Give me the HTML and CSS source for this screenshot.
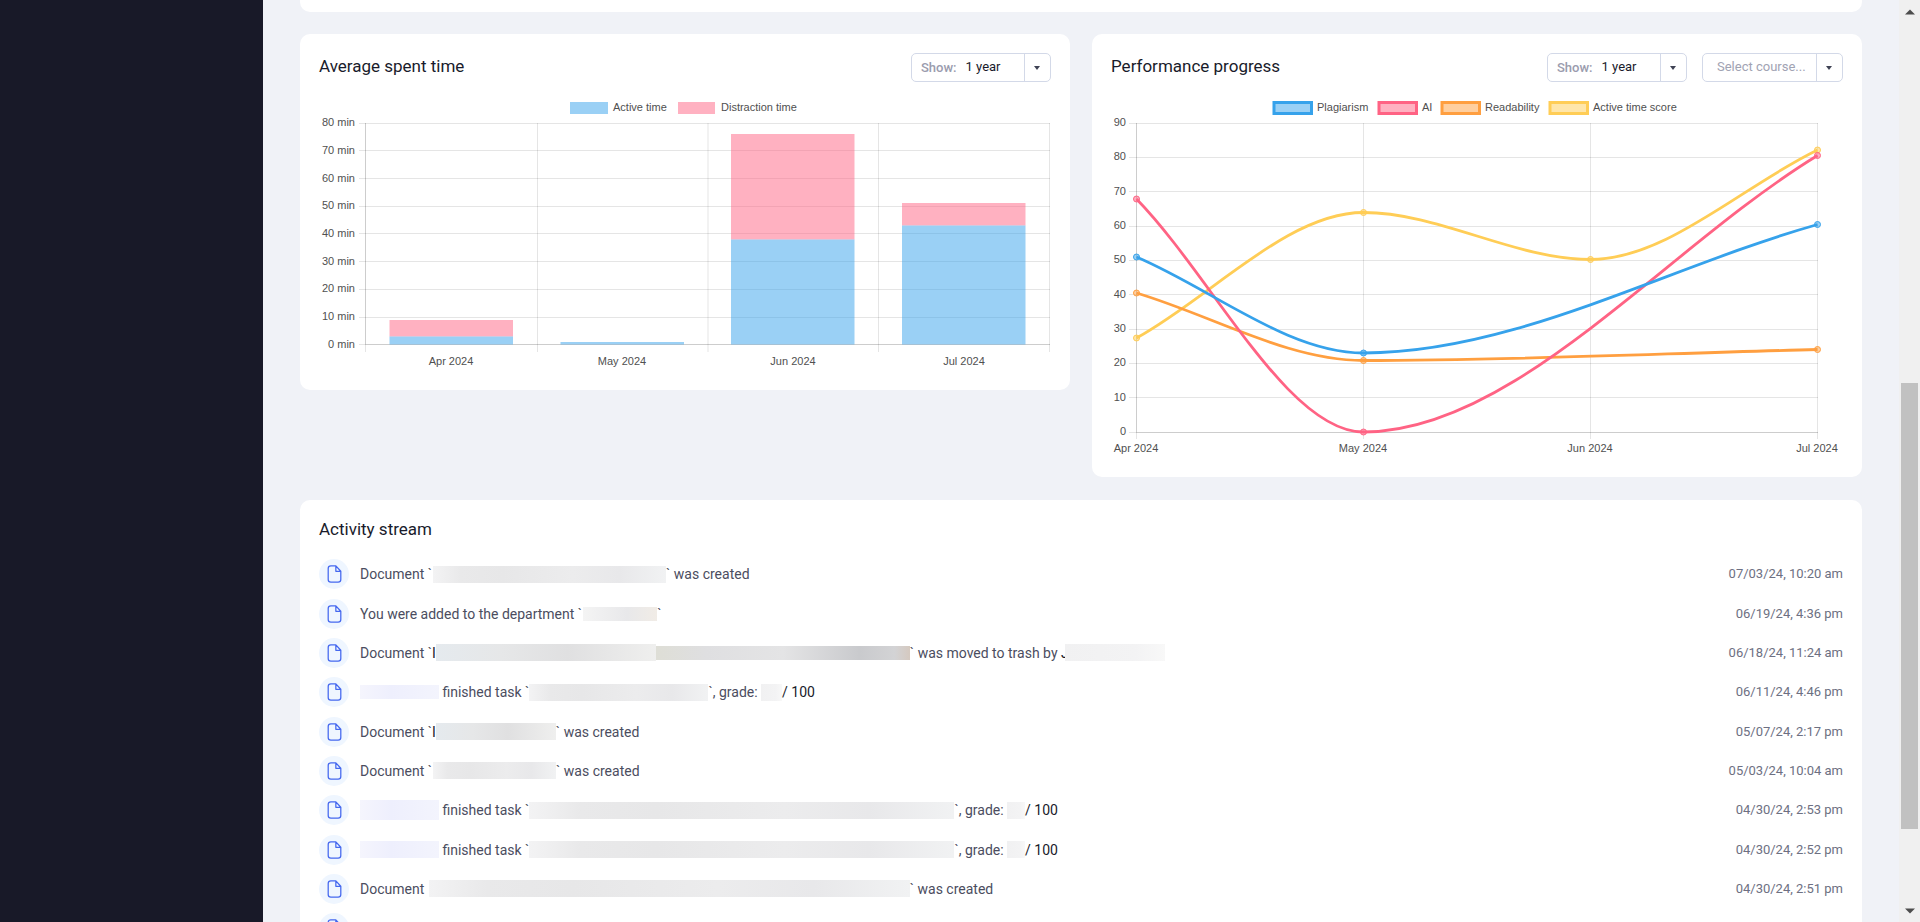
FILE: index.html
```html
<!DOCTYPE html>
<html lang="en">
<head>
<meta charset="utf-8">
<title>Dashboard</title>
<link rel="stylesheet" href="styles.css">
</head>
<body>
<svg class="sprite" aria-hidden="true">
  <symbol id="doc" viewBox="0 0 16 20">
    <path d="M9.5 1H4Q1 1 1 4V16Q1 19 4 19H12Q15 19 15 16V7Z M9.5 1V7H15" fill="none" stroke="currentColor" stroke-width="1.4" stroke-linejoin="round"/>
  </symbol>
</svg>
<div class="app">
  <nav class="sidebar" aria-label="Main"></nav>
  <main class="main">
    <section class="card card-tail"></section>
    <div class="charts">
      <section class="card">
        <header class="card-head">
          <h2>Average spent time</h2>
          <div class="filters">
            <div class="picker">
              <label for="spent-range">Show:</label>
              <select id="spent-range"><option>1 year</option></select>
            </div>
          </div>
        </header>
        <svg class="chart" viewBox="319 100 732 271" role="img" aria-label="Average spent time by month">
          <g class="legend">
            <rect x="570" y="102" width="38" height="12" class="fill-blue"/>
            <text x="613" y="111">Active time</text>
            <rect x="678" y="102" width="37" height="12" class="fill-pink"/>
            <text x="721" y="111">Distraction time</text>
          </g>
          <path class="grid" d="M359 123.5H1050M359 150.5H1050M359 178.5H1050M359 206.5H1050M359 233.5H1050M359 261.5H1050M359 289.5H1050M359 317.5H1050M359 344.5H1050M365.5 123V352M537.5 123V352M708 123V352M878.5 123V352M1049.5 123V352"/>
          <path class="grid" d="M365.5 123V344M365 344.5H1050"/>
          <g class="fill-pink">
            <rect x="389.5" y="320" width="123.5" height="16.5"/>
            <rect x="731" y="134" width="123.5" height="105.5"/>
            <rect x="902" y="203" width="123.5" height="22.5"/>
          </g>
          <g class="fill-blue">
            <rect x="389.5" y="336.5" width="123.5" height="8"/>
            <rect x="560.5" y="342" width="123.5" height="2.5"/>
            <rect x="731" y="239.5" width="123.5" height="105"/>
            <rect x="902" y="225.5" width="123.5" height="119"/>
          </g>
          <g class="ticks-y">
            <text x="355" y="126">80 min</text><text x="355" y="154">70 min</text><text x="355" y="182">60 min</text>
            <text x="355" y="209">50 min</text><text x="355" y="237">40 min</text><text x="355" y="265">30 min</text>
            <text x="355" y="292">20 min</text><text x="355" y="320">10 min</text><text x="355" y="348">0 min</text>
          </g>
          <g class="ticks-x">
            <text x="451" y="365">Apr 2024</text><text x="622" y="365">May 2024</text>
            <text x="793" y="365">Jun 2024</text><text x="964" y="365">Jul 2024</text>
          </g>
        </svg>
      </section>
      <section class="card">
        <header class="card-head">
          <h2>Performance progress</h2>
          <div class="filters">
            <div class="picker">
              <label for="progress-range">Show:</label>
              <select id="progress-range"><option>1 year</option></select>
            </div>
            <div class="picker picker-empty">
              <select aria-label="Course"><option>Select course...</option></select>
            </div>
          </div>
        </header>
        <svg class="chart" viewBox="1111 100 732 358" role="img" aria-label="Performance progress by month">
          <g class="legend legend-lines">
            <rect x="1274" y="102.5" width="37.5" height="11" class="blue"/>
            <text x="1317" y="111">Plagiarism</text>
            <rect x="1379" y="102.5" width="37.5" height="11" class="pink"/>
            <text x="1422" y="111">AI</text>
            <rect x="1442" y="102.5" width="37.5" height="11" class="orange"/>
            <text x="1485" y="111">Readability</text>
            <rect x="1550" y="102.5" width="37.5" height="11" class="yellow"/>
            <text x="1593" y="111">Active time score</text>
          </g>
          <path class="grid" d="M1129 123.5H1818M1129 157.5H1818M1129 191.5H1818M1129 226.5H1818M1129 260.5H1818M1129 294.5H1818M1129 329.5H1818M1129 363.5H1818M1129 397.5H1818M1129 432.5H1818M1136.5 123V439M1363.5 123V439M1590.5 123V439M1817.5 123V439"/>
          <path class="grid" d="M1136.5 123V432M1136 432.5H1818"/>
          <g class="series yellow">
            <path d="M1136.5 338C1212.2 296.2 1287.8 212.5 1363.5 212.5C1439.2 212.5 1514.8 259.5 1590.5 259.5C1666.2 259.5 1741.8 186.5 1817.5 150"/>
            <circle cx="1136.5" cy="338" r="3"/><circle cx="1363.5" cy="212.5" r="3"/><circle cx="1590.5" cy="259.5" r="3"/><circle cx="1817.5" cy="150" r="3"/>
          </g>
          <g class="series orange">
            <path d="M1136.5 293C1212.2 315.5 1287.8 360.5 1363.5 360.5C1514.8 360.5 1666.2 353.2 1817.5 349.5"/>
            <circle cx="1136.5" cy="293" r="3"/><circle cx="1363.5" cy="360.5" r="3"/><circle cx="1817.5" cy="349.5" r="3"/>
          </g>
          <g class="series pink">
            <path d="M1136.5 199C1212.2 276.7 1287.8 432 1363.5 432C1514.8 432 1666.2 247.7 1817.5 155.5"/>
            <circle cx="1136.5" cy="199" r="3"/><circle cx="1363.5" cy="432" r="3"/><circle cx="1817.5" cy="155.5" r="3"/>
          </g>
          <g class="series blue">
            <path d="M1136.5 257C1212.2 289 1287.8 353 1363.5 353C1514.8 353 1666.2 267.3 1817.5 224.5"/>
            <circle cx="1136.5" cy="257" r="3"/><circle cx="1363.5" cy="353" r="3"/><circle cx="1817.5" cy="224.5" r="3"/>
          </g>
          <g class="ticks-y">
            <text x="1126" y="126">90</text><text x="1126" y="160">80</text><text x="1126" y="195">70</text><text x="1126" y="229">60</text><text x="1126" y="263">50</text>
            <text x="1126" y="298">40</text><text x="1126" y="332">30</text><text x="1126" y="366">20</text><text x="1126" y="401">10</text><text x="1126" y="435">0</text>
          </g>
          <g class="ticks-x">
            <text x="1136" y="452">Apr 2024</text><text x="1363" y="452">May 2024</text>
            <text x="1590" y="452">Jun 2024</text><text x="1817" y="452">Jul 2024</text>
          </g>
        </svg>
      </section>
    </div>
    <section class="card stream">
      <h2>Activity stream</h2>
      <ul>
        <li><span class="badge"><svg><use href="#doc"/></svg></span><p>Document `<i class="mask" style="width:233px"></i>` was created</p><time>07/03/24, 10:20 am</time></li>
        <li><span class="badge"><svg><use href="#doc"/></svg></span><p>You were added to the department `<i class="mask short warm" style="width:74px"></i>`</p><time>06/19/24, 4:36 pm</time></li>
        <li><span class="badge"><svg><use href="#doc"/></svg></span><p>Document `<b class="peek">I</b><i class="mask cool" style="width:220px"></i><i class="mask short dark" style="width:254px"></i>` was moved to trash by <b class="peek">J</b><i class="mask over pale" style="width:100px"></i></p><time>06/18/24, 11:24 am</time></li>
        <li><span class="badge"><svg><use href="#doc"/></svg></span><p><i class="mask short name" style="width:79px"></i> finished task `<i class="mask" style="width:179px"></i>`, grade: <i class="mask pale" style="width:21px"></i><strong>/ 100</strong></p><time>06/11/24, 4:46 pm</time></li>
        <li><span class="badge"><svg><use href="#doc"/></svg></span><p>Document `<b class="peek">I</b><i class="mask cool" style="width:120px"></i>` was created</p><time>05/07/24, 2:17 pm</time></li>
        <li><span class="badge"><svg><use href="#doc"/></svg></span><p>Document `<i class="mask" style="width:123px"></i>` was created</p><time>05/03/24, 10:04 am</time></li>
        <li><span class="badge"><svg><use href="#doc"/></svg></span><p><i class="mask tall name" style="width:79px"></i> finished task `<i class="mask" style="width:425px"></i>`, grade: <i class="mask pale" style="width:18px"></i><strong>/ 100</strong></p><time>04/30/24, 2:53 pm</time></li>
        <li><span class="badge"><svg><use href="#doc"/></svg></span><p><i class="mask name" style="width:79px"></i> finished task `<i class="mask" style="width:425px"></i>`, grade: <i class="mask pale" style="width:18px"></i><strong>/ 100</strong></p><time>04/30/24, 2:52 pm</time></li>
        <li><span class="badge"><svg><use href="#doc"/></svg></span><p>Document <i class="mask" style="width:481px"></i>` was created</p><time>04/30/24, 2:51 pm</time></li>
        <li><span class="badge"><svg><use href="#doc"/></svg></span></li>
      </ul>
    </section>
  </main>
  <div class="scrollbar" aria-hidden="true">
    <svg viewBox="0 0 10 6"><path d="M0 5.5L5 0.5L10 5.5Z"/></svg>
    <div class="track"><div class="thumb"></div></div>
    <svg viewBox="0 0 10 6"><path d="M0 0.5L5 5.5L10 0.5Z"/></svg>
  </div>
</div>
</body>
</html>
```
FILE: styles.css
```css
* { box-sizing: border-box; }
body {
  margin: 0;
  background: #f0f2f7;
  color: #191b2b;
  font: 14px/20px Roboto, "Liberation Sans", sans-serif;
}
h2, p, ul { margin: 0; padding: 0; }
h2 { font-size: 17px; line-height: 24px; font-weight: 400; }
.sprite { display: none; }
.app { display: flex; height: 100vh; overflow: hidden; }
.sidebar { flex: 0 0 263px; background: #181928; }
.main {
  flex: 1;
  min-width: 0;
  display: flex;
  flex-direction: column;
  gap: 22px;
  padding: 0 37px;
}
.card { background: #fff; border-radius: 10px; padding: 19px; }
.card-tail { flex: none; padding: 0; height: 12px; border-radius: 0 0 10px 10px; }
.charts {
  flex: none;
  display: grid;
  grid-template-columns: 1fr 1fr;
  gap: 22px;
  align-items: start;
  padding-bottom: 1px;
}
.card-head { display: flex; justify-content: space-between; align-items: flex-start; margin-bottom: 18px; }
.card-head h2 { padding-top: 1px; }
.filters { display: flex; gap: 15px; }

.picker {
  display: flex;
  align-items: center;
  width: 140px;
  height: 29px;
  padding-left: 9px;
  border: 1px solid #d3d9e8;
  border-radius: 5px;
  position: relative;
  background: linear-gradient(#d3d9e8, #d3d9e8) right 25px top / 1px 100% no-repeat;
}
.picker::after {
  content: "";
  position: absolute;
  right: 10px;
  top: 12px;
  border: 3px solid transparent;
  border-top: 4px solid #3f4254;
  border-bottom: 0;
  pointer-events: none;
}
.picker label { color: #9a9cae; font-size: 13px; font-weight: 500; }
.picker select {
  flex: 1;
  min-width: 0;
  height: 100%;
  padding: 0 0 2px 9px;
  border: 0;
  background: none;
  appearance: none;
  font: inherit;
  font-size: 13px;
  color: #191b2b;
}
.picker-empty { width: 141px; padding-left: 5px; }
.picker-empty select { color: #a1a3b3; }

.chart { display: block; width: 100%; height: auto; }
.chart text { font-family: "Liberation Sans", Arial, sans-serif; font-size: 11px; fill: #505050; }
.ticks-y text { text-anchor: end; }
.ticks-x text { text-anchor: middle; }
.grid { fill: none; stroke: rgba(0, 0, 0, 0.1); stroke-width: 1; }
.fill-blue { fill: rgba(54, 162, 235, 0.5); }
.fill-pink { fill: rgba(255, 99, 132, 0.5); }
.blue { stroke: #36a2eb; fill: rgba(54, 162, 235, 0.5); }
.pink { stroke: #ff6384; fill: rgba(255, 99, 132, 0.5); }
.orange { stroke: #ff9f40; fill: rgba(255, 159, 64, 0.5); }
.yellow { stroke: #ffcd56; fill: rgba(255, 205, 86, 0.5); }
.legend-lines rect { stroke-width: 3; }
.series path { fill: none; stroke-width: 2.8; }
.series circle { stroke-width: 1; }

.stream { flex: none; padding-top: 17px; }
.stream ul { list-style: none; padding-top: 13px; }
.stream li { display: flex; align-items: center; height: 39px; }
.stream li:nth-child(3n + 1) { height: 40px; }
.badge {
  flex: none;
  display: flex;
  align-items: center;
  justify-content: center;
  width: 30px;
  height: 30px;
  margin-right: 11px;
  border-radius: 50%;
  background: #eff6ff;
  color: #4568ef;
}
.badge svg { width: 15px; height: 18px; }
.stream p { flex: 1; display: flex; align-items: center; white-space: pre; color: #4b4d60; }
.stream strong { font-weight: 400; color: #191b2b; }
.stream time { font-size: 13px; color: #6d7082; }
.peek { font-weight: 400; color: #191b2b; }
.mask {
  height: 17px;
  margin-left: 1px;
  background: linear-gradient(90deg, #f3f3f4, #e9e9ea 12%, #e7e7e8 30%, #ececed 60%, #e8e8ea 80%, #f1f2f3);
}
.mask + .mask, .name { margin-left: 0; }
.mask.over { position: relative; margin-left: -4px; }
.mask.short { height: 14px; }
.mask.tall { height: 20px; }
.mask.warm { background: linear-gradient(90deg, #f4f4f4, #e8e8ea 60%, #f1ece6); }
.mask.cool { margin-left: 0; background: linear-gradient(90deg, #e5eaee, #e6e7e8 30%, #e0e0e1 60%, #efefee); }
.mask.dark { background: linear-gradient(90deg, #deded6, #dfdfe1 20%, #e4e4e5 50%, #c9cacd 80%, #d3d3d5 94%, #d5c9c0); }
.mask.pale { background: linear-gradient(90deg, #f1f1f2, #f3f3f4 70%, #f8f8f8); }
.mask.name { background: linear-gradient(90deg, #f5f5fd, #eeeffd 40%, #f3f4fd); }

.scrollbar {
  flex: 0 0 21px;
  display: flex;
  flex-direction: column;
  align-items: center;
  gap: 12px;
  padding: 9px 0 8px;
  background: #f0f0f0;
}
.scrollbar svg { width: 10px; height: 6px; fill: #4d4d4d; }
.track { flex: 1; width: 17px; display: flex; flex-direction: column; }
.track::before { content: ""; flex: 356; }
.thumb { flex: 446; background: #c1c1c1; }
.track::after { content: ""; flex: 67; }
```
